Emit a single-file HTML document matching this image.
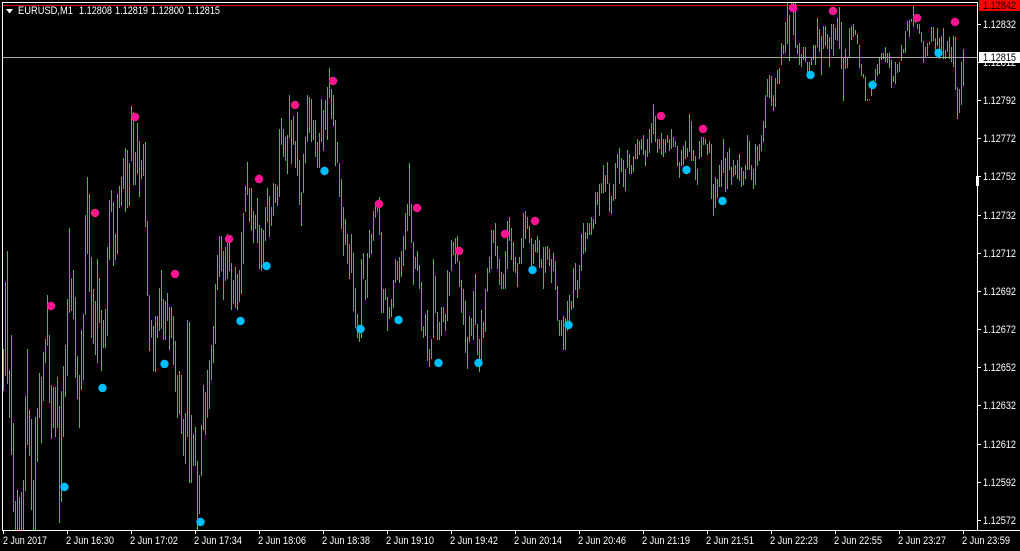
<!DOCTYPE html>
<html><head><meta charset="utf-8"><title>EURUSD,M1</title>
<style>
html,body{margin:0;padding:0;background:#000;width:1020px;height:551px;overflow:hidden}
svg{display:block}
text{font-family:"Liberation Sans",sans-serif;font-size:11px;fill:#fff}
</style></head><body>
<svg width="1020" height="551" viewBox="0 0 1020 551" xmlns="http://www.w3.org/2000/svg">
<rect width="1020" height="551" fill="#000"/>
<path transform="translate(.5 0)" fill="none" stroke="#32cd32" stroke-width="1" shape-rendering="crispEdges" d="M3 349V391M5 282V376M7 251V384M9 370V418M11 335V455M13 423V512M15 501V530M17 490V530M19 497V530M21 492V530M23 480V530M25 396V491M27 349V445M29 410V456M31 419V510M33 480V530M35 417V530M37 408V462M39 373V418M41 377V443M43 352V401M45 339V363M47 295V346M49 335V403M51 385V439M53 387V428M55 387V437M57 377V428M59 406V523M61 391V502M63 366V437M65 345V397M67 299V376M69 228V313M71 278V311M73 270V319M75 297V378M77 356V399M79 375V428M81 330V390M83 314V380M85 215V315M87 177V254M89 194V292M91 257V338M93 289V344M95 301V355M97 259V363M99 278V323M101 310V371M103 320V348M105 309V348M107 247V336M109 200V260M111 190V212M113 202V266M115 234V260M117 194V254M119 186V208M121 177V206M123 158V189M125 148V212M127 150V208M129 163V206M131 106V161M133 112V185M135 152V185M137 123V174M139 141V197M141 160V179M143 144V176M145 142V227M147 221V296M149 295V351M151 320V338M153 326V371M155 316V372M157 316V338M159 288V331M161 270V329M163 299V340M165 301V340M167 293V321M169 307V350M171 307V338M173 316V365M175 341V392M177 375V418M179 371V414M181 375V434M183 419V456M185 413V464M187 320V437M189 322V483M191 415V483M193 434V466M195 427V466M197 461V530M199 475V514M201 425V476M203 385V430M205 392V435M207 370V418M209 360V409M211 345V380M213 326V363M215 284V344M217 255V290M219 236V277M221 236V271M223 251V300M225 247V281M227 234V279M229 239V271M231 263V310M233 280V304M235 267V308M237 274V310M239 270V302M241 232V294M243 213V264M245 186V212M247 162V195M249 188V222M251 188V231M253 211V243M255 215V229M257 198V243M259 225V269M261 228V271M263 230V264M265 207V241M267 188V222M269 196V237M271 207V226M273 183V216M275 184V203M277 186V206M279 129V197M281 118V145M283 129V157M285 137V161M287 135V174M289 95V138M291 120V164M293 116V145M295 141V168M297 112V176M299 160V205M301 192V226M303 154V193M305 137V163M307 95V142M309 97V133M311 99V142M313 120V140M315 120V157M317 142V168M319 133V168M321 99V142M323 110V151M325 100V130M327 87V140M329 68V98M331 89V119M333 95V126M335 120V166M337 142V163M339 163V197
M341 179V229M343 207V256M345 219V245M347 234V264M349 244V279M351 234V273M353 253V311M355 288V328M357 314V338M359 329V342M361 259V338M363 253V279M365 280V300M367 253V298M369 230V258M371 234V254M373 211V241M375 202V218M377 200V212M379 197V235M381 232V313M383 289V313M385 289V300M387 297V331M389 307V319M391 299V317M393 280V308M395 259V283M397 261V280M399 257V283M401 251V277M403 236V266M405 213V250M407 204V231M409 163V216M411 204V243M413 242V285M415 257V269M417 251V271M419 265V289M421 282V331M423 326V338M425 314V336M427 310V361M429 349V367M431 339V359M433 259V338M435 276V313M437 312V340M439 322V340M441 307V336M443 307V322M445 314V331M447 270V321M449 272V296M451 240V271M453 242V255M455 238V264M457 236V262M459 261V287M461 280V313M463 289V325M465 301V353M467 337V369M469 316V342M471 318V336M473 291V340M475 274V325M477 324V355M479 339V372M481 310V363M483 322V338M485 289V332M487 268V292M489 257V273M491 230V269M493 230V243M495 223V256M497 246V269M499 259V285M501 272V289M503 274V289M505 251V289M507 221V269M509 217V241M511 228V260M513 242V271M515 257V273M517 263V287M519 257V264M521 238V264M523 213V248M525 211V239M527 217V229M529 226V243M531 238V267M533 244V264M535 240V252M537 236V253M539 240V268M541 259V268M543 247V289M545 247V273M547 246V260M549 249V266M551 259V283M553 253V271M555 261V290M557 286V321M559 320V336M561 320V336M563 316V350M565 318V350M567 301V331M569 295V322M571 301V310M573 268V308M575 263V290M577 280V298M579 265V289M581 234V271M583 223V254M585 232V252M587 223V239M589 223V235M591 217V235M593 219V229M595 192V224M597 192V205M599 184V216M601 183V193M603 165V193M605 175V192M607 162V184M609 183V212M611 196V214M613 184V201M615 163V199M617 154V168M619 148V184M621 158V172M623 160V187M625 169V191M627 150V168M629 154V174M631 165V174M633 156V172M635 144V159M637 139V159M639 141V155M641 139V150M643 135V155M645 150V166M647 139V157M649 129V153M651 123V143M653 104V134M655 116V142M657 139V153M659 139V149M661 133V155M663 139V157M665 139V153M667 135V143M669 139V151M671 129V149M673 137V147M675 141V147M677 146V166M679 162V178
M681 150V166M683 146V165M685 141V159M687 148V157M689 114V152M691 121V161M693 150V161M695 156V180M697 169V185M699 141V159M701 137V157M703 137V145M705 139V145M707 144V155M709 141V153M711 144V199M713 184V216M715 177V208M717 179V198M719 165V187M721 160V187M723 139V173M725 158V192M727 152V189M729 148V170M731 167V185M733 160V177M735 165V175M737 160V179M739 154V181M741 167V187M743 171V185M745 165V179M747 135V170M749 141V170M751 165V180M753 169V189M755 144V185M757 146V166M759 144V161M761 135V151M763 121V142M765 95V128M767 79V97M769 75V98M771 76V106M773 95V111M775 78V107M777 70V84M779 68V84M781 43V65M783 45V54M785 22V53M787 3V44M789 15V61M791 2V10M793 3V35M795 3V48M797 45V54M799 43V65M801 54V67M803 47V60M805 47V62M807 62V74M809 62V75M811 57V65M813 45V60M815 45V65M817 18V47M819 29V52M821 36V75M823 26V49M825 26V46M827 34V49M829 37V67M831 24V49M833 24V56M835 28V40M837 18V41M839 7V49M841 22V69M843 57V101M845 49V69M847 57V68M849 28V57M851 26V40M853 24V37M855 30V35M857 34V44M859 45V68M861 64V76M863 74V78M865 77V101M867 99V101M869 99V100M871 85V96M873 80V84M875 69V81M877 64V76M879 58V74M881 53V60M883 53V59M885 47V62M887 53V63M889 53V68M891 60V88M893 76V82M895 62V84M897 64V73M899 62V72M901 45V61M903 49V53M905 31V53M907 21V31M909 20V37M911 19V22M913 5V27M915 15V23M917 24V29M919 24V34M921 32V42M923 41V63M925 47V58M927 43V56M929 42V45M931 27V42M933 27V41M935 38V52M937 28V46M939 38V59M941 36V50M943 28V59M945 50V59M947 41V52M949 37V59M951 47V62M953 36V67M955 37V90M957 87V119M959 89V113M961 62V105M963 49V86"/>
<rect x="3" y="5" width="974" height="1" fill="#f00000" shape-rendering="crispEdges"/>
<rect x="3" y="57" width="974" height="1" fill="#aaaaaa" shape-rendering="crispEdges"/>
<g fill="#ff1493">
<circle cx="51" cy="306" r="4.2"/><circle cx="95" cy="213" r="4.2"/><circle cx="135" cy="117" r="4.2"/><circle cx="175" cy="274" r="4.2"/><circle cx="229" cy="239" r="4.2"/><circle cx="259" cy="179" r="4.2"/><circle cx="295" cy="105" r="4.2"/><circle cx="333" cy="81" r="4.2"/><circle cx="379" cy="204" r="4.2"/><circle cx="417" cy="208" r="4.2"/><circle cx="459" cy="251" r="4.2"/><circle cx="505" cy="234" r="4.2"/><circle cx="535" cy="221" r="4.2"/><circle cx="661" cy="116" r="4.2"/><circle cx="703" cy="129" r="4.2"/><circle cx="793" cy="8" r="4.2"/><circle cx="833" cy="11" r="4.2"/><circle cx="917" cy="18" r="4.2"/><circle cx="955" cy="22" r="4.2"/>
</g>
<g fill="#00bfff">
<circle cx="64.500" cy="487" r="4.2"/><circle cx="102.500" cy="388" r="4.2"/><circle cx="164.500" cy="364" r="4.2"/><circle cx="200.500" cy="522" r="4.2"/><circle cx="240.500" cy="321" r="4.2"/><circle cx="266.500" cy="266" r="4.2"/><circle cx="324.500" cy="171" r="4.2"/><circle cx="360.500" cy="329" r="4.2"/><circle cx="398.500" cy="320" r="4.2"/><circle cx="438.500" cy="363" r="4.2"/><circle cx="478.500" cy="363" r="4.2"/><circle cx="532.500" cy="270" r="4.2"/><circle cx="568.500" cy="325" r="4.2"/><circle cx="686.500" cy="170" r="4.2"/><circle cx="722.500" cy="201" r="4.2"/><circle cx="810.500" cy="75" r="4.2"/><circle cx="872.500" cy="85" r="4.2"/><circle cx="938.500" cy="53" r="4.2"/>
</g>
<g fill="#fff" shape-rendering="crispEdges">
<rect x="2" y="2" width="976" height="1"/><rect x="2" y="2" width="1" height="529"/><rect x="977" y="2" width="1" height="529"/><rect x="2" y="530" width="1018" height="1"/>
<rect x="976" y="176" width="3" height="10"/>
<path d="M978 24h3v1h-3zM978 62h3v1h-3zM978 100h3v1h-3zM978 138h3v1h-3zM978 176h3v1h-3zM978 215h3v1h-3zM978 253h3v1h-3zM978 291h3v1h-3zM978 329h3v1h-3zM978 367h3v1h-3zM978 405h3v1h-3zM978 444h3v1h-3zM978 482h3v1h-3zM978 520h3v1h-3z"/>
<path d="M3 531h1v3h-1zM67 531h1v3h-1zM131 531h1v3h-1zM195 531h1v3h-1zM259 531h1v3h-1zM323 531h1v3h-1zM387 531h1v3h-1zM451 531h1v3h-1zM515 531h1v3h-1zM579 531h1v3h-1zM643 531h1v3h-1zM707 531h1v3h-1zM771 531h1v3h-1zM835 531h1v3h-1zM899 531h1v3h-1zM963 531h1v3h-1z"/>
<path d="M6 9h7l-3.500 4.500z" shape-rendering="auto"/>
</g>
<text x="18" y="14" textLength="55" lengthAdjust="spacingAndGlyphs">EURUSD,M1</text>
<text x="79" y="14" textLength="33" lengthAdjust="spacingAndGlyphs">1.12808</text>
<text x="115" y="14" textLength="33" lengthAdjust="spacingAndGlyphs">1.12819</text>
<text x="151" y="14" textLength="33" lengthAdjust="spacingAndGlyphs">1.12800</text>
<text x="187" y="14" textLength="33" lengthAdjust="spacingAndGlyphs">1.12815</text>
<g>
<text x="983" y="28" textLength="33" lengthAdjust="spacingAndGlyphs">1.12832</text>
<text x="983" y="66" textLength="33" lengthAdjust="spacingAndGlyphs">1.12812</text>
<text x="983" y="104" textLength="33" lengthAdjust="spacingAndGlyphs">1.12792</text>
<text x="983" y="142" textLength="33" lengthAdjust="spacingAndGlyphs">1.12772</text>
<text x="983" y="180" textLength="33" lengthAdjust="spacingAndGlyphs">1.12752</text>
<text x="983" y="219" textLength="33" lengthAdjust="spacingAndGlyphs">1.12732</text>
<text x="983" y="257" textLength="33" lengthAdjust="spacingAndGlyphs">1.12712</text>
<text x="983" y="295" textLength="33" lengthAdjust="spacingAndGlyphs">1.12692</text>
<text x="983" y="333" textLength="33" lengthAdjust="spacingAndGlyphs">1.12672</text>
<text x="983" y="371" textLength="33" lengthAdjust="spacingAndGlyphs">1.12652</text>
<text x="983" y="409" textLength="33" lengthAdjust="spacingAndGlyphs">1.12632</text>
<text x="983" y="448" textLength="33" lengthAdjust="spacingAndGlyphs">1.12612</text>
<text x="983" y="486" textLength="33" lengthAdjust="spacingAndGlyphs">1.12592</text>
<text x="983" y="524" textLength="33" lengthAdjust="spacingAndGlyphs">1.12572</text>
</g>
<rect x="979" y="0" width="41" height="11" fill="#ff0000" shape-rendering="crispEdges"/>
<text x="983" y="9" textLength="33" lengthAdjust="spacingAndGlyphs" style="fill:#000">1.12842</text>
<rect x="979" y="52" width="41" height="11" fill="#ffffff" shape-rendering="crispEdges"/>
<text x="983" y="61" textLength="33" lengthAdjust="spacingAndGlyphs" style="fill:#000">1.12815</text>
<g>
<text x="3" y="544" textLength="44" lengthAdjust="spacingAndGlyphs">2 Jun 2017</text>
<text x="66" y="544" textLength="48" lengthAdjust="spacingAndGlyphs">2 Jun 16:30</text>
<text x="130" y="544" textLength="48" lengthAdjust="spacingAndGlyphs">2 Jun 17:02</text>
<text x="194" y="544" textLength="48" lengthAdjust="spacingAndGlyphs">2 Jun 17:34</text>
<text x="258" y="544" textLength="48" lengthAdjust="spacingAndGlyphs">2 Jun 18:06</text>
<text x="322" y="544" textLength="48" lengthAdjust="spacingAndGlyphs">2 Jun 18:38</text>
<text x="386" y="544" textLength="48" lengthAdjust="spacingAndGlyphs">2 Jun 19:10</text>
<text x="450" y="544" textLength="48" lengthAdjust="spacingAndGlyphs">2 Jun 19:42</text>
<text x="514" y="544" textLength="48" lengthAdjust="spacingAndGlyphs">2 Jun 20:14</text>
<text x="578" y="544" textLength="48" lengthAdjust="spacingAndGlyphs">2 Jun 20:46</text>
<text x="642" y="544" textLength="48" lengthAdjust="spacingAndGlyphs">2 Jun 21:19</text>
<text x="706" y="544" textLength="48" lengthAdjust="spacingAndGlyphs">2 Jun 21:51</text>
<text x="770" y="544" textLength="48" lengthAdjust="spacingAndGlyphs">2 Jun 22:23</text>
<text x="834" y="544" textLength="48" lengthAdjust="spacingAndGlyphs">2 Jun 22:55</text>
<text x="898" y="544" textLength="48" lengthAdjust="spacingAndGlyphs">2 Jun 23:27</text>
<text x="962" y="544" textLength="48" lengthAdjust="spacingAndGlyphs">2 Jun 23:59</text>
</g>
</svg>
</body></html>
